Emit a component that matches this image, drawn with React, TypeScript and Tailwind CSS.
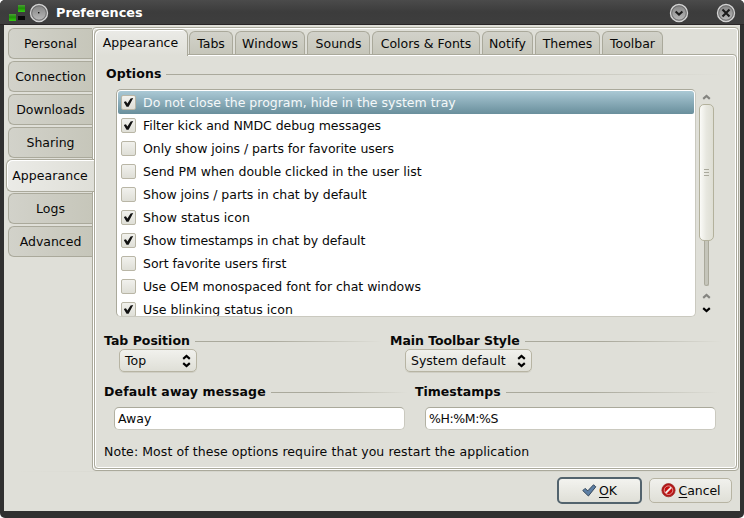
import React from "react";
import clsx from "clsx";

const sideTabs = ["Personal", "Connection", "Downloads", "Sharing", "Appearance", "Logs", "Advanced"];

const topTabs = [
  { label: "Tabs", width: "w-[44px]" },
  { label: "Windows", width: "w-[70px]" },
  { label: "Sounds", width: "w-[63px]" },
  { label: "Colors & Fonts", width: "w-[108px]" },
  { label: "Notify", width: "w-[51px]" },
  { label: "Themes", width: "w-[65px]" },
  { label: "Toolbar", width: "w-[61px]" },
];

const options = [
  { label: "Do not close the program, hide in the system tray", checked: true, tracking: "" },
  { label: "Filter kick and NMDC debug messages", checked: true, tracking: "tracking-[-0.05px]" },
  { label: "Only show joins / parts for favorite users", checked: false, tracking: "tracking-[-0.06px]" },
  { label: "Send PM when double clicked in the user list", checked: false, tracking: "" },
  { label: "Show joins / parts in chat by default", checked: false, tracking: "tracking-[-0.04px]" },
  { label: "Show status icon", checked: true, tracking: "tracking-[0.06px]" },
  { label: "Show timestamps in chat by default", checked: true, tracking: "tracking-[-0.1px]" },
  { label: "Sort favorite users first", checked: false, tracking: "tracking-[-0.03px]" },
  { label: "Use OEM monospaced font for chat windows", checked: false, tracking: "tracking-[-0.03px]" },
  { label: "Use blinking status icon", checked: true, tracking: "tracking-[0.04px]" },
];

function Heading({ label, className, tracking }: { label: string; className?: string; tracking?: string }) {
  return (
    <div className={clsx("flex h-4 gap-[5px]", className)}>
      <span className={clsx("font-bold whitespace-nowrap", tracking)}>{label}</span>
      <span className="mt-[8px] h-px flex-1 bg-linear-to-r from-[#aaa99c] from-40% to-[#dfdfd8]" />
    </div>
  );
}

function CheckBox({ checked }: { checked: boolean }) {
  return (
    <span className="flex size-[15px] shrink-0 items-center justify-center rounded-[2px] border border-[#b9b6a6] bg-linear-to-b from-[#f1f1ed] to-[#dfdfd7]">
      {checked && (
        <svg width="11" height="11" viewBox="0 0 11 11">
          <path d="M0.8 5 2.9 4.3 4.4 6.5 7.6 1.4 10.2 0.9 5.6 9.7H3.5Z" fill="#111" />
        </svg>
      )}
    </span>
  );
}

function Chevron({ up = false, color }: { up?: boolean; color: string }) {
  return (
    <svg width="9" height="6" viewBox="0 0 9 6" className={clsx("block", up && "rotate-180")}>
      <path d="M1.2 1.2 4.5 4 7.8 1.2" fill="none" stroke={color} strokeWidth="2.2" />
    </svg>
  );
}

function Combo({ value, className }: { value: string; className: string }) {
  return (
    <button
      className={clsx(
        "flex h-[23px] items-center justify-between rounded-[5px] border border-[#b7b4a3] bg-linear-to-b from-[#f1f1ed] to-[#dfdfd7] pr-[5px] pl-[5px] shadow-[0_1px_0_#cfcec4]",
        className,
      )}
    >
      <span className="whitespace-nowrap">{value}</span>
      <span className="flex flex-col gap-[2px]">
        <Chevron up color="#000" />
        <Chevron color="#000" />
      </span>
    </button>
  );
}

function Field({ value, className }: { value: string; className: string }) {
  return (
    <div
      className={clsx(
        "flex h-[23px] items-center rounded-[5px] border border-[#cac9bf] border-t-[#aaa99b] border-l-[#b2b1a3] bg-white pl-[3px]",
        className,
      )}
    >
      {value}
    </div>
  );
}

function RoundButton({ kind, className }: { kind: "menu" | "shade" | "close"; className: string }) {
  return (
    <svg width="20" height="20" viewBox="0 0 20 20" className={clsx("shrink-0", className)}>
      <defs>
        <linearGradient id={"face-" + kind} x1="0" y1="0" x2="0" y2="1">
          <stop offset="0" stopColor="#858585" />
          <stop offset="1" stopColor="#b8b8b8" />
        </linearGradient>
      </defs>
      <circle cx="10" cy="10" r="8.5" fill="#777" stroke="#d2d2d2" strokeWidth="1.4" />
      <circle cx="10" cy="10" r="7.1" fill={"url(#face-" + kind + ")"} stroke="#656565" strokeWidth="0.6" />
      {kind === "menu" && <rect x="9" y="9" width="1.4" height="1.4" fill="#111" />}
      {kind === "shade" && <path d="M6.6 8.5 10 11.5 13.4 8.5" fill="none" stroke="#1b1b1b" strokeWidth="2.1" />}
      {kind === "close" && <path d="M6.5 6.5 13.5 13.5M13.5 6.5 6.5 13.5" stroke="#1b1b1b" strokeWidth="2.1" />}
    </svg>
  );
}

function TitleBar() {
  return (
    <header className="flex h-[25px] items-center border-b border-[#292526] bg-linear-to-b from-[#4b4b4b] via-[#3c3c3c] to-[#3e3e3e] pl-[9px] text-white">
      <svg width="16" height="16" viewBox="0 0 16 16" className="mt-px">
        <defs>
          <linearGradient id="leaf" x1="0" y1="0" x2="0" y2="1">
            <stop offset="0" stopColor="#4c9c38" />
            <stop offset="0.45" stopColor="#1f8f08" />
            <stop offset="1" stopColor="#35cc12" />
          </linearGradient>
        </defs>
        <rect x="9" y="0" width="7" height="7" fill="url(#leaf)" />
        <rect x="0" y="9" width="7" height="7" fill="url(#leaf)" />
        <rect x="9" y="8" width="7" height="7" fill="#090909" />
        <rect x="9" y="8" width="7" height="3" fill="#3c3c3c" />
      </svg>
      <RoundButton kind="menu" className="mt-px ml-[4px]" />
      <h1 className="mt-[2px] ml-[7px] text-[12.8px] font-bold">Preferences</h1>
      <RoundButton kind="shade" className="mt-[1px] mr-[27px] ml-auto" />
      <RoundButton kind="close" className="mt-[1px] mr-[8px]" />
    </header>
  );
}

function OptionList() {
  return (
    <div className="ml-[20px] flex">
      <div className="h-[228px] w-[580px] overflow-hidden rounded-[5px] border border-t-[#aaa99b] border-r-[#cac9bf] border-b-[#cac9bf] border-l-[#aaa99b] bg-white p-px">
        {options.map((o, i) => (
          <div
            key={o.label}
            className={clsx(
              "flex h-[23px] items-center gap-[7px] pl-[3px] whitespace-nowrap",
              i === 0 && "rounded-t-[3px] rounded-b-[2px] bg-linear-to-b from-[#abc9d5] to-[#698f9c] text-[#f4f8f9]",
            )}
          >
            <CheckBox checked={o.checked} />
            <span className={o.tracking}>{o.label}</span>
          </div>
        ))}
      </div>
      <div className="ml-[3px] flex h-[228px] w-[15px] flex-col items-center pt-[5px]">
        <Chevron up color="#858580" />
        <div className="mt-[4px] h-[137px] w-[15px] shrink-0 rounded-[5px] border border-[#b3b19c] bg-linear-to-r from-[#fbfbf8] via-[#e7e7df] to-[#deded4]">
          <div className="mt-[64px] flex flex-col items-center gap-[2px]">
            <i className="h-px w-[5px] bg-[#aaa99c]" />
            <i className="h-px w-[5px] bg-[#aaa99c]" />
            <i className="h-px w-[5px] bg-[#aaa99c]" />
          </div>
        </div>
        <div className="h-[45px] w-[5px] shrink-0 rounded-b-[3px] border border-t-0 border-[#aaa99b] bg-[#c5c5ba]" />
        <div className="mt-[7px] flex flex-col gap-[8px]">
          <Chevron up color="#858580" />
          <Chevron color="#000" />
        </div>
      </div>
    </div>
  );
}

export default function App() {
  return (
    <div className="h-[518px] w-[744px] overflow-hidden rounded-[5px] bg-[#303030] font-['DejaVu_Sans',sans-serif] text-[12.5px] leading-4 text-[#080808]">
      <TitleBar />
      <div className="mx-[4px] flex h-[486px] flex-col bg-[#dfdfd8] pt-[2px]">
        <div className="flex h-[444px]">
          <nav className="flex w-[88px] flex-col gap-[2px] pt-[1px] pl-[4px]">
            {sideTabs.map((label) =>
              label === "Appearance" ? (
                <div
                  key={label}
                  className="relative z-10 -mt-px -mb-px -ml-[2px] flex h-[33px] w-[88px] shrink-0 items-center justify-center rounded-l-[6px] border border-r-0 border-[#aaa99b] bg-linear-to-r from-[#ebebe7] to-[#dfdfd8] pr-[1px] tracking-[0.06px] whitespace-nowrap inset-shadow-[1px_1px_0_#fff]"
                >
                  {label}
                </div>
              ) : (
                <div
                  key={label}
                  className="flex h-[31px] w-[84px] shrink-0 items-center justify-center rounded-l-[6px] border border-r-0 border-[#aaa99b] bg-linear-to-r from-[#d2d2ca] to-[#c6c6ba] whitespace-nowrap"
                >
                  {label}
                </div>
              ),
            )}
          </nav>
          <div className="h-[444px] w-[647px] rounded-[4px] border border-[#aaa99b] bg-[#dfdfd8] p-px inset-shadow-[0_0_0_1px_#fff]">
            <div className="flex h-[25px] items-end gap-[2px]">
              <div className="relative z-10 -mb-[2px] flex h-[27px] w-[94px] items-center justify-center rounded-t-[6px] border border-b-0 border-[#aaa99b] bg-linear-to-b from-[#ebebe7] to-[#dfdfd8] pr-px pb-px tracking-[0.05px] inset-shadow-[1px_1px_0_#fff]">
                Appearance
              </div>
              {topTabs.map((t, i) => (
                <div
                  key={t.label}
                  className={clsx(
                    "flex h-[23px] items-center justify-center rounded-t-[6px] border border-b-0 border-[#aaa99b] bg-linear-to-b from-[#d2d2ca] to-[#c6c6ba] pt-[2px] whitespace-nowrap",
                    i === 0 && "-ml-[1px]",
                    t.width,
                  )}
                >
                  {t.label}
                </div>
              ))}
            </div>
            <main className="h-[415px] rounded-b-[4px] rounded-tr-[4px] border border-[#aaa99b] px-px pt-[11px] inset-shadow-[0_0_0_1px_#fff]">
              <Heading label="Options" tracking="tracking-[0.1px]" className="mr-[14px] ml-[10px]" />
              <div className="mt-[7px]">
                <OptionList />
              </div>
              <div className="mt-[16px] flex">
                <div className="w-[286px] pl-[8px]">
                  <Heading label="Tab Position" />
                  <Combo value="Top" className="ml-[15px] w-[78px]" />
                </div>
                <div className="w-[340px] pl-[8px]">
                  <Heading label="Main Toolbar Style" tracking="tracking-[-0.05px]" />
                  <Combo value="System default" className="ml-[15px] w-[127px]" />
                </div>
              </div>
              <div className="mt-[12px] flex">
                <div className="w-[311px] pl-[8px]">
                  <Heading label="Default away message" tracking="tracking-[0.14px]" />
                  <Field value="Away" className="mt-[7px] ml-[10px] w-[291px]" />
                </div>
                <div className="w-[312px] pl-[8px]">
                  <Heading label="Timestamps" />
                  <Field value="%H:%M:%S" className="mt-[7px] ml-[10px] w-[291px] tracking-[-0.4px]" />
                </div>
              </div>
              <p className="mt-[14px] ml-[8px] tracking-[0.075px] whitespace-nowrap">
                Note: Most of these options require that you restart the application
              </p>
            </main>
          </div>
        </div>
        <div className="mx-[10px] h-px shrink-0 bg-linear-to-r from-[#dfdfd8] via-[#cdcdc4] to-[#dfdfd8]" />
        <footer className="mt-[5px] flex items-center justify-end gap-[7px] pr-[8px]">
          <button className="flex h-[27px] w-[85px] items-center justify-center gap-[2px] rounded-[5px] border-2 border-[#52636d] bg-linear-to-b from-[#f3f3ef] to-[#dfdfd7] pr-px">
            <svg width="16" height="16" viewBox="0 0 16 16">
              <path d="M1.8 7.6 4 5.4 6.8 7.8 12.5 1.8 14.8 3.8 7.4 13Z" fill="#5d7fa5" stroke="#34475b" strokeLinejoin="round" />
            </svg>
            <span><u className="underline-offset-2">O</u>K</span>
          </button>
          <button className="flex h-[25px] w-[83px] items-center justify-center gap-[3px] rounded-[5px] border border-[#b7b4a3] bg-linear-to-b from-[#f1f1ed] to-[#dfdfd7]">
            <svg width="15" height="15" viewBox="0 0 15 15">
              <circle cx="7.5" cy="7.2" r="6.6" fill="#b31414" stroke="#9a2a28" strokeWidth="0.8" />
              <circle cx="7.5" cy="7.2" r="4.3" fill="#c40d0d" stroke="#e2a5a1" strokeWidth="0.9" />
              <path d="M4.7 10 10.3 4.4" stroke="#f3e9e7" strokeWidth="1.9" />
            </svg>
            <span className="tracking-[-0.1px]"><u className="underline-offset-2">C</u>ancel</span>
          </button>
        </footer>
      </div>
    </div>
  );
}
